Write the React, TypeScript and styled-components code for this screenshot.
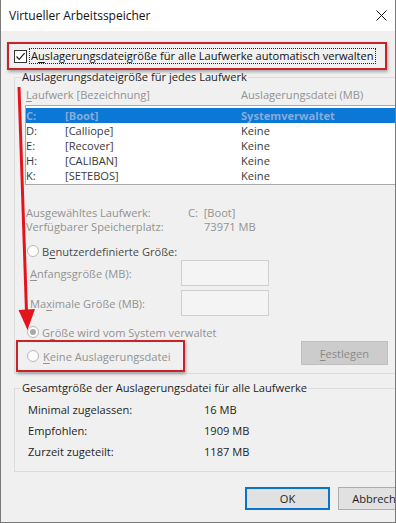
import React from "react";
import styled, { createGlobalStyle } from "styled-components";

const FONT = `"Segoe UI", "Open Sans", "Noto Sans", sans-serif`;

const Global = createGlobalStyle`
  html, body { margin: 0; padding: 0; background: #ffffff; }
  #root { width: 396px; height: 523px; }
`;

const Window = styled.div`
  position: relative;
  box-sizing: border-box;
  width: 396px;
  height: 523px;
  border: 1px solid #7a7a7a;
  border-top: none;
  background: #f0f0f0;
  overflow: hidden;
  font-family: ${FONT};
  font-size: 11.1px;
  color: #1e1e1e;
  display: flex;
  flex-direction: column;
`;

const TitleBar = styled.div`
  flex: none;
  height: 31px;
  background: #ffffff;
  display: flex;
  align-items: center;
  justify-content: space-between;
  padding-left: 8px;
`;

const Title = styled.span`
  font-size: 12px;
  line-height: 16px;
  color: #111;
`;

const Close = styled.span`
  width: 20px;
  height: 31px;
  margin-right: 4px;
  display: flex;
  align-items: center;
  justify-content: center;
`;

const Body = styled.div`
  flex: none;
  display: flex;
  flex-direction: column;
  align-items: flex-start;
  padding: 11px 0 0 6px;
`;

const RedFrame = styled.div<{ $w: number; $h: number; $pad: number }>`
  box-sizing: border-box;
  flex: none;
  width: ${(p) => p.$w}px;
  height: ${(p) => p.$h}px;
  border: 2px solid #c8222b;
  box-shadow: 1px 2px 3px rgba(0, 0, 0, 0.3);
  display: flex;
  align-items: center;
  gap: 3px;
  padding-left: ${(p) => p.$pad}px;
`;

const CheckBox = styled.span`
  box-sizing: border-box;
  flex: none;
  width: 13px;
  height: 13px;
  border: 1px solid #333;
  background: #fff;
  display: flex;
  align-items: center;
  justify-content: center;
  margin-right: -2px;
`;

const FocusText = styled.span`
  border: 1px dotted #222;
  padding: 0 1px;
  line-height: 14px;
  margin-left: 1px;
  color: #111;
  white-space: nowrap;
`;

const Key = styled.span`
  text-decoration: underline;
  text-underline-offset: 2px;
`;

const Group = styled.fieldset<{ $mt: number; $pb: number }>`
  box-sizing: border-box;
  flex: none;
  margin: ${(p) => p.$mt}px 0 0 7px;
  width: 391px;
  min-width: 0;
  border: 1px solid #dcdcdc;
  padding: 0 0 ${(p) => p.$pb}px 11px;
  display: flex;
  flex-direction: column;
  align-items: flex-start;
`;

const Legend = styled.legend`
  padding: 0 1px;
  margin-left: -5px;
  line-height: 14px;
  color: #1e1e1e;
  white-space: nowrap;
`;

const HeaderRow = styled.div`
  display: grid;
  grid-template-columns: 215px 1fr;
  width: 360px;
  height: 21px;
  align-items: center;
  color: #929292;
  white-space: nowrap;
`;

const ListBox = styled.div`
  box-sizing: border-box;
  margin-left: -1px;
  width: 373px;
  height: 80px;
  border: 1px solid #a9a9a9;
  padding-top: 2px;
  background: #ffffff;
`;

const ListRow = styled.div<{ $selected?: boolean }>`
  display: grid;
  grid-template-columns: 39px 176px 1fr;
  height: 15px;
  line-height: 15px;
  white-space: nowrap;
  background: ${(p) => (p.$selected ? "#0a78d4" : "transparent")};
  color: ${(p) => (p.$selected ? "#86acdc" : "#3a3a3a")};
  font-weight: ${(p) => (p.$selected ? 700 : 400)};
`;

const InfoBlock = styled.div`
  margin-top: 21px;
  display: flex;
  flex-direction: column;
`;

const InfoRow = styled.div`
  display: grid;
  grid-template-columns: 162px 1fr;
  line-height: 14px;
  height: 14px;
  color: #929292;
  white-space: nowrap;
`;

const InfoValue = styled.span<{ $indent?: number }>`
  padding-left: ${(p) => p.$indent ?? 0}px;
`;

const RadioRow = styled.div<{ $mt: number; $dim?: boolean }>`
  margin-top: ${(p) => p.$mt}px;
  height: 16px;
  display: flex;
  align-items: center;
  gap: 3px;
  padding-left: 1px;
  color: ${(p) => (p.$dim ? "#929292" : "#4a4a4a")};
  white-space: nowrap;
`;

const Radio = styled.span<{ $checked?: boolean }>`
  box-sizing: border-box;
  flex: none;
  width: 12px;
  height: 12px;
  border-radius: 50%;
  border: 1px solid #b8b8b8;
  background: #fdfdfd;
  display: flex;
  align-items: center;
  justify-content: center;
  &::after {
    content: "";
    display: ${(p) => (p.$checked ? "block" : "none")};
    width: 6px;
    height: 6px;
    border-radius: 50%;
    background: #a8a8a8;
  }
`;

const SizeRow = styled.div<{ $mt: number }>`
  margin-top: ${(p) => p.$mt}px;
  display: grid;
  grid-template-columns: 151px 88px;
  align-items: center;
  padding-left: 4px;
  color: #929292;
  white-space: nowrap;
`;

const SizeInput = styled.span`
  box-sizing: border-box;
  display: block;
  height: 26px;
  border: 1px solid #cfcfcf;
  background: #f4f4f4;
`;

const BottomRow = styled.div`
  margin-left: -10px;
  width: 372px;
  display: flex;
  justify-content: space-between;
  align-items: flex-start;
`;

const Button = styled.span<{ $w: number; $h: number; $variant: "default" | "normal" | "disabled" }>`
  box-sizing: border-box;
  flex: none;
  width: ${(p) => p.$w}px;
  height: ${(p) => p.$h}px;
  display: flex;
  align-items: center;
  justify-content: center;
  white-space: nowrap;
  background: ${(p) => (p.$variant === "disabled" ? "#cccccc" : "#e1e1e1")};
  border: ${(p) =>
    p.$variant === "default"
      ? "2px solid #0a74cc"
      : p.$variant === "disabled"
      ? "1px solid #bfbfbf"
      : "1px solid #adadad"};
  color: ${(p) => (p.$variant === "disabled" ? "#8a8a8a" : "#1e1e1e")};
`;

const FestlegenWrap = styled.div`
  margin-top: 1px;
`;

const SummaryRows = styled.div`
  padding-top: 5px;
  padding-left: 2px;
  display: flex;
  flex-direction: column;
  gap: 1px;
`;

const SummaryRow = styled.div`
  display: grid;
  grid-template-columns: 176px 1fr;
  height: 20px;
  line-height: 20px;
  color: #1e1e1e;
  white-space: nowrap;
`;

const ButtonRow = styled.div`
  margin-top: 15px;
  padding-left: 238px;
  display: flex;
  gap: 8px;
`;

const ArrowLayer = styled.svg`
  position: absolute;
  left: -1px;
  top: 0;
  pointer-events: none;
`;

const drives = [
  { letter: "C:", label: "[Boot]", value: "Systemverwaltet", selected: true },
  { letter: "D:", label: "[Calliope]", value: "Keine" },
  { letter: "E:", label: "[Recover]", value: "Keine" },
  { letter: "H:", label: "[CALIBAN]", value: "Keine" },
  { letter: "K:", label: "[SETEBOS]", value: "Keine" },
];

const summary = [
  { label: "Minimal zugelassen:", value: "16 MB" },
  { label: "Empfohlen:", value: "1909 MB" },
  { label: "Zurzeit zugeteilt:", value: "1187 MB" },
];

export default function App() {
  return (
    <>
      <Global />
      <Window>
        <TitleBar>
          <Title>Virtueller Arbeitsspeicher</Title>
          <Close>
            <svg width="11" height="11" viewBox="0 0 11 11">
              <path d="M0.5 0.5 L10.5 10.5 M10.5 0.5 L0.5 10.5" stroke="#111" strokeWidth="1" fill="none" />
            </svg>
          </Close>
        </TitleBar>
        <Body>
          <RedFrame $w={380} $h={28} $pad={5}>
            <CheckBox>
              <svg width="11" height="11" viewBox="0 0 11 11">
                <path d="M1.5 5.5 L4.2 8.3 L9.6 2.2" stroke="#222" strokeWidth="1.2" fill="none" />
              </svg>
            </CheckBox>
            <FocusText>
              A<Key>u</Key>slagerungsdateigröße für alle Laufwerke automatisch verwalten
            </FocusText>
          </RedFrame>

          <Group $mt={0} $pb={1}>
            <Legend>Auslagerungsdateigröße für jedes Laufwerk</Legend>
            <HeaderRow>
              <span>
                <Key>L</Key>aufwerk [Bezeichnung]
              </span>
              <span>Auslagerungsdatei (MB)</span>
            </HeaderRow>
            <ListBox>
              {drives.map((d) => (
                <ListRow key={d.letter} $selected={d.selected}>
                  <span>{d.letter}</span>
                  <span>{d.label}</span>
                  <span>{d.value}</span>
                </ListRow>
              ))}
            </ListBox>
            <InfoBlock>
              <InfoRow>
                <span>Ausgewähltes Laufwerk:</span>
                <InfoValue>C:&nbsp;&nbsp;[Boot]</InfoValue>
              </InfoRow>
              <InfoRow>
                <span>Verfügbarer Speicherplatz:</span>
                <InfoValue $indent={16}>73971 MB</InfoValue>
              </InfoRow>
            </InfoBlock>
            <RadioRow $mt={9}>
              <Radio />
              <span>
                B<Key>e</Key>nutzerdefinierte Größe:
              </span>
            </RadioRow>
            <SizeRow $mt={1}>
              <span>
                <Key>A</Key>nfangsgröße (MB):
              </span>
              <SizeInput />
            </SizeRow>
            <SizeRow $mt={4}>
              <span>
                Ma<Key>x</Key>imale Größe (MB):
              </span>
              <SizeInput />
            </SizeRow>
            <RadioRow $mt={8} $dim>
              <Radio $checked />
              <span>
                G<Key>r</Key>öße wird vom System verwaltet
              </span>
            </RadioRow>
            <BottomRow>
              <RedFrame $w={169} $h={32} $pad={9}>
                <Radio />
                <RadioRow $mt={0} $dim>
                  <span>
                    <Key>K</Key>eine Auslagerungsdatei
                  </span>
                </RadioRow>
              </RedFrame>
              <FestlegenWrap>
                <Button $w={87} $h={24} $variant="disabled">
                  <span>
                    <Key>F</Key>estlegen
                  </span>
                </Button>
              </FestlegenWrap>
            </BottomRow>
          </Group>

          <Group $mt={7} $pb={9}>
            <Legend>Gesamtgröße der Auslagerungsdatei für alle Laufwerke</Legend>
            <SummaryRows>
              {summary.map((s) => (
                <SummaryRow key={s.label}>
                  <span>{s.label}</span>
                  <span>{s.value}</span>
                </SummaryRow>
              ))}
            </SummaryRows>
          </Group>

          <ButtonRow>
            <Button $w={85} $h={23} $variant="default">
              OK
            </Button>
            <Button $w={85} $h={23} $variant="normal">
              Abbrechen
            </Button>
          </ButtonRow>
        </Body>
        <ArrowLayer width="396" height="523" viewBox="0 0 396 523">
          <path d="M19 87 L26.5 312" stroke="#e3141d" strokeWidth="3" fill="none" />
          <path d="M18.5 310 L35 309 L27.5 330 Z" fill="#e3141d" />
        </ArrowLayer>
      </Window>
    </>
  );
}
